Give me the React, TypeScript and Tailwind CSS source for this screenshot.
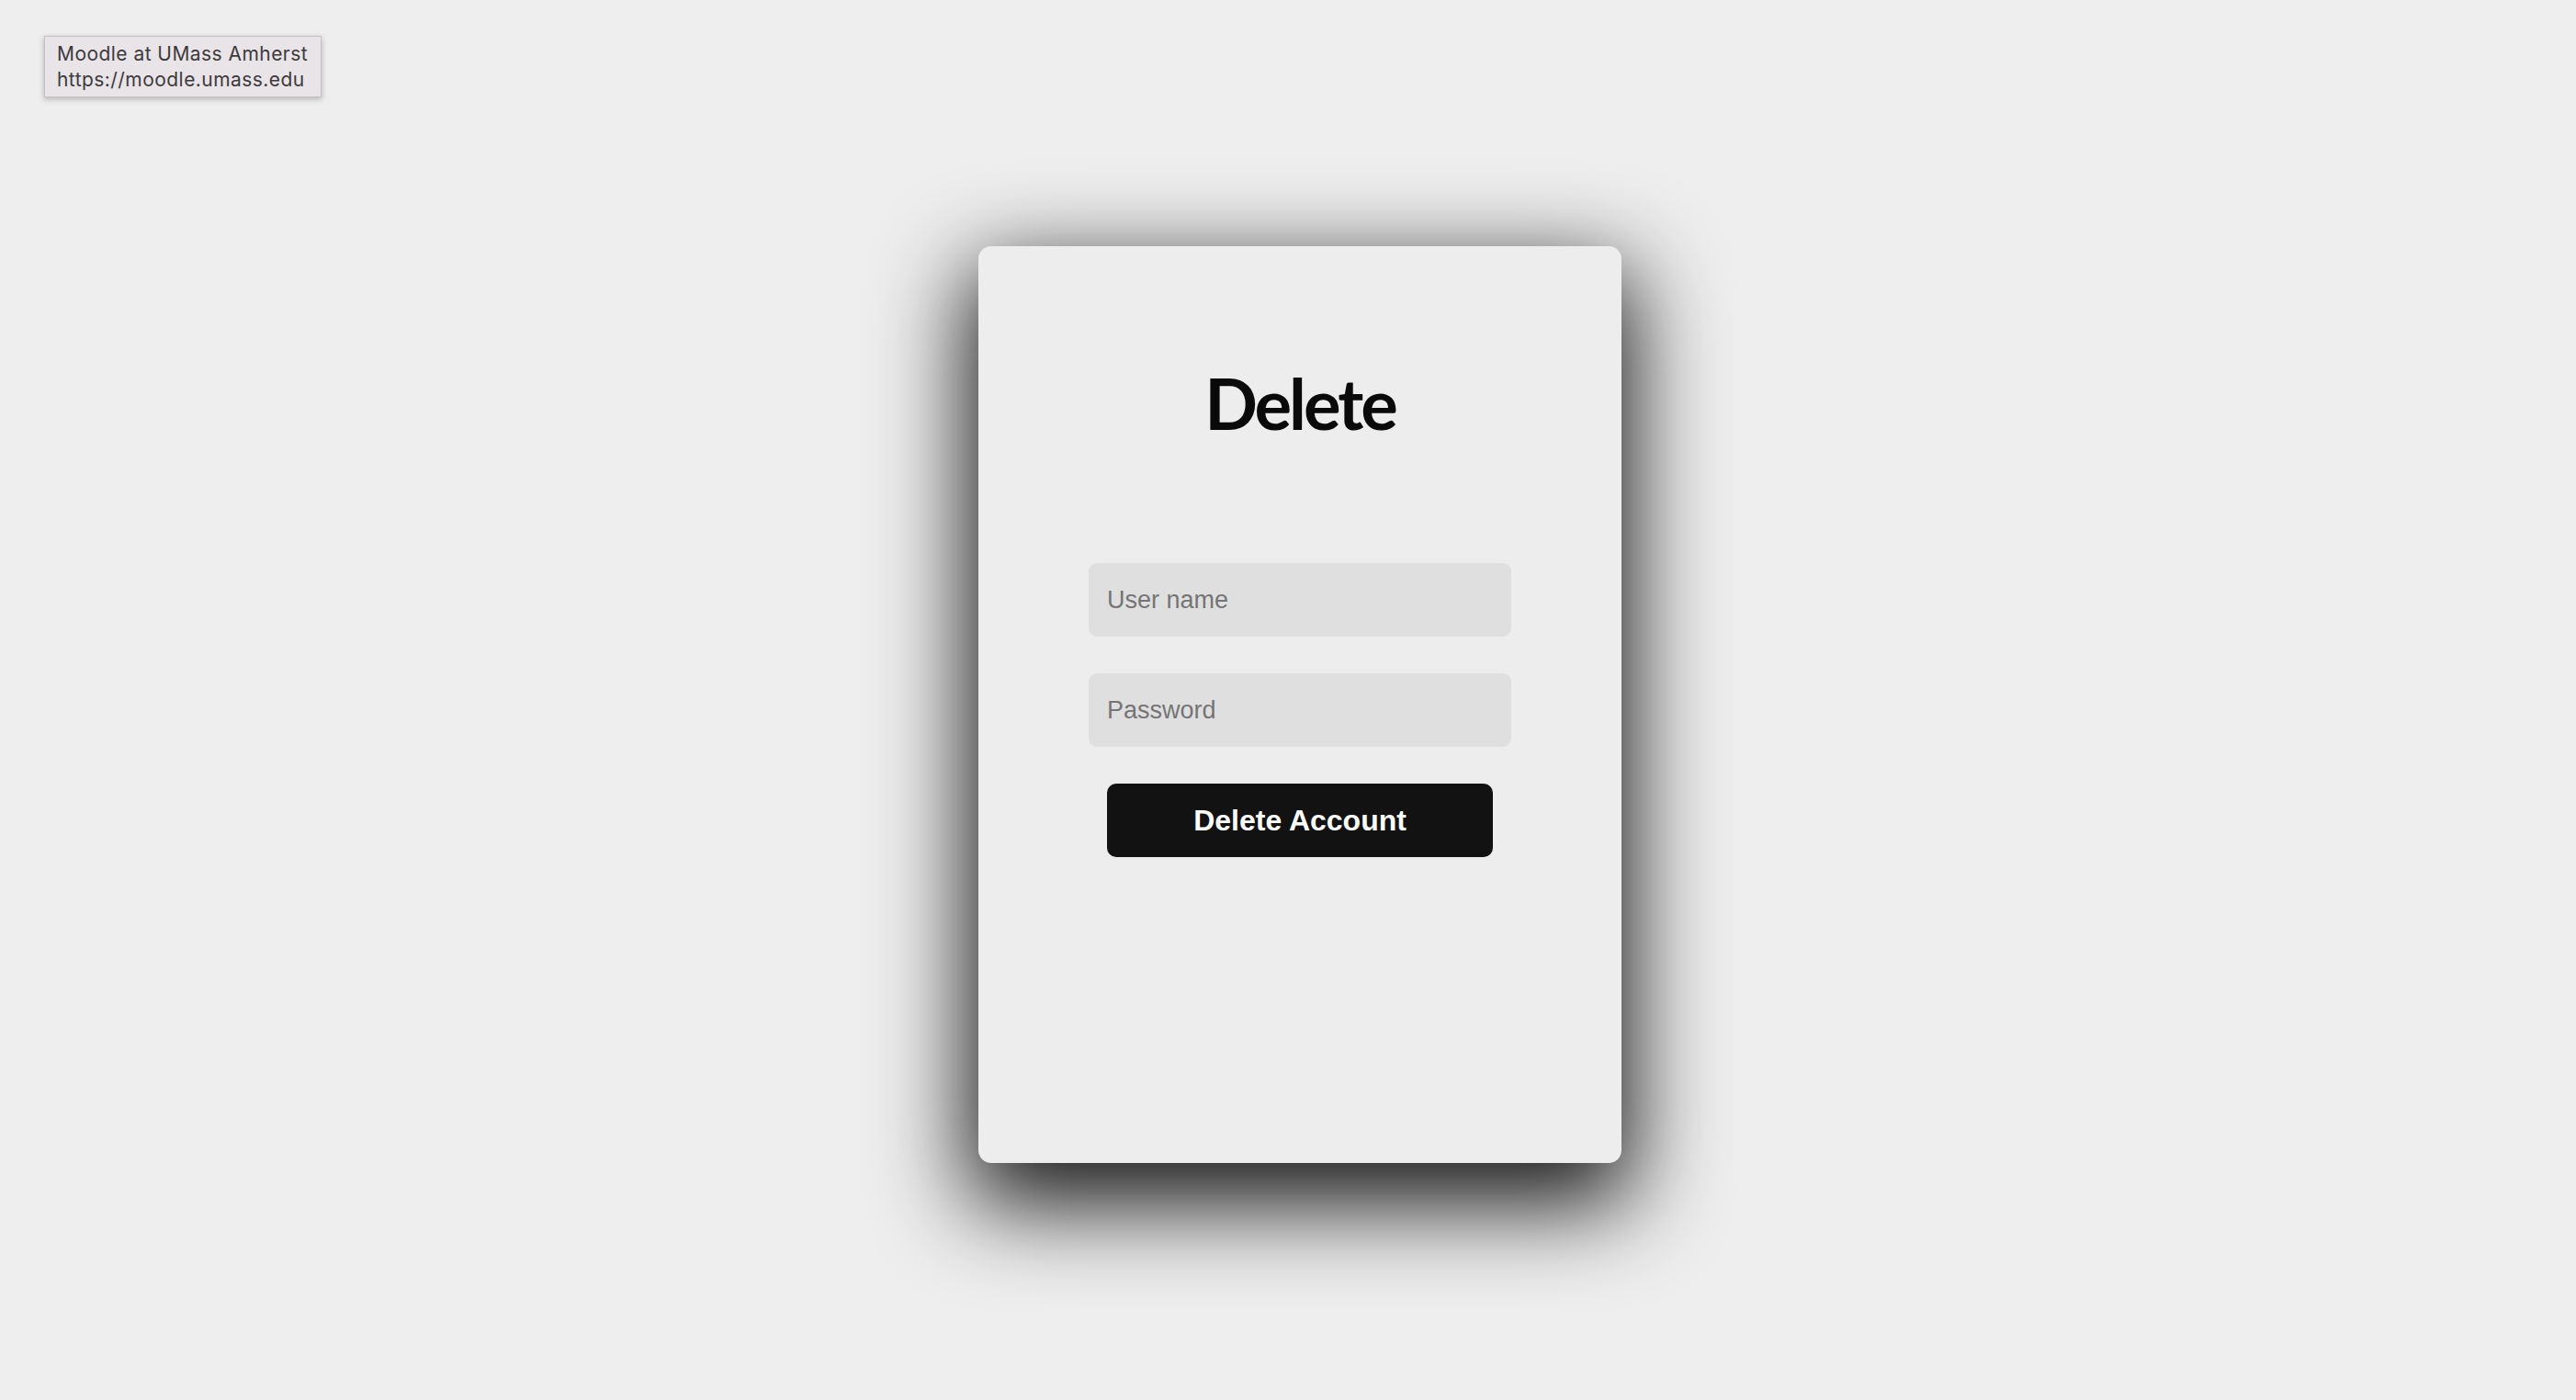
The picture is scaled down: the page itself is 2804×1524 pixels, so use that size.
export default function App() {
  return (
    <div className="relative w-full h-[1524px] bg-[#eeeeee] overflow-hidden">
      {/* browser tooltip */}
      <div className="absolute left-[48px] top-[39px] w-[302px] h-[67px] bg-[#e8e4e7] border border-[#c4c0c4] shadow-[0_2px_6px_rgba(0,0,0,0.25)] pl-[13px] pt-[5px] text-[21px] leading-[28px] text-[#3d3a3d] font-['Inter',sans-serif] tracking-[0.45px]">
        <div>Moodle at UMass Amherst</div>
        <div>https://moodle.umass.edu</div>
      </div>

      <div className="flex justify-center pl-[26px] pt-[268px]">
        <div className="w-[700px] h-[998px] bg-[#ededed] rounded-[14px] shadow-[0_35px_100px_10px_rgba(0,0,0,0.9)] flex flex-col items-center pt-[133px]">
          <h1 className="text-[76px] leading-none font-bold text-[#0a0a0a] tracking-[-3px] font-['Lato',sans-serif]">
            Delete
          </h1>

          <form className="mt-[136px] flex flex-col items-center gap-[40px]">
            <input
              type="text"
              placeholder="User name"
              className="w-[460px] h-[80px] rounded-[9px] bg-[#e0dfe0] px-[20px] text-[27px] outline-none placeholder:text-[#757575] font-['Liberation_Sans',Arial,sans-serif]"
            />
            <input
              type="password"
              placeholder="Password"
              className="w-[460px] h-[80px] rounded-[9px] bg-[#e0dfe0] px-[20px] text-[27px] outline-none placeholder:text-[#757575] font-['Liberation_Sans',Arial,sans-serif]"
            />
            <button
              type="button"
              className="w-[420px] h-[80px] rounded-[10px] bg-[#121212] text-white text-[32px] font-bold font-['Liberation_Sans',Arial,sans-serif]"
            >
              Delete Account
            </button>
          </form>
        </div>
      </div>
    </div>
  );
}
